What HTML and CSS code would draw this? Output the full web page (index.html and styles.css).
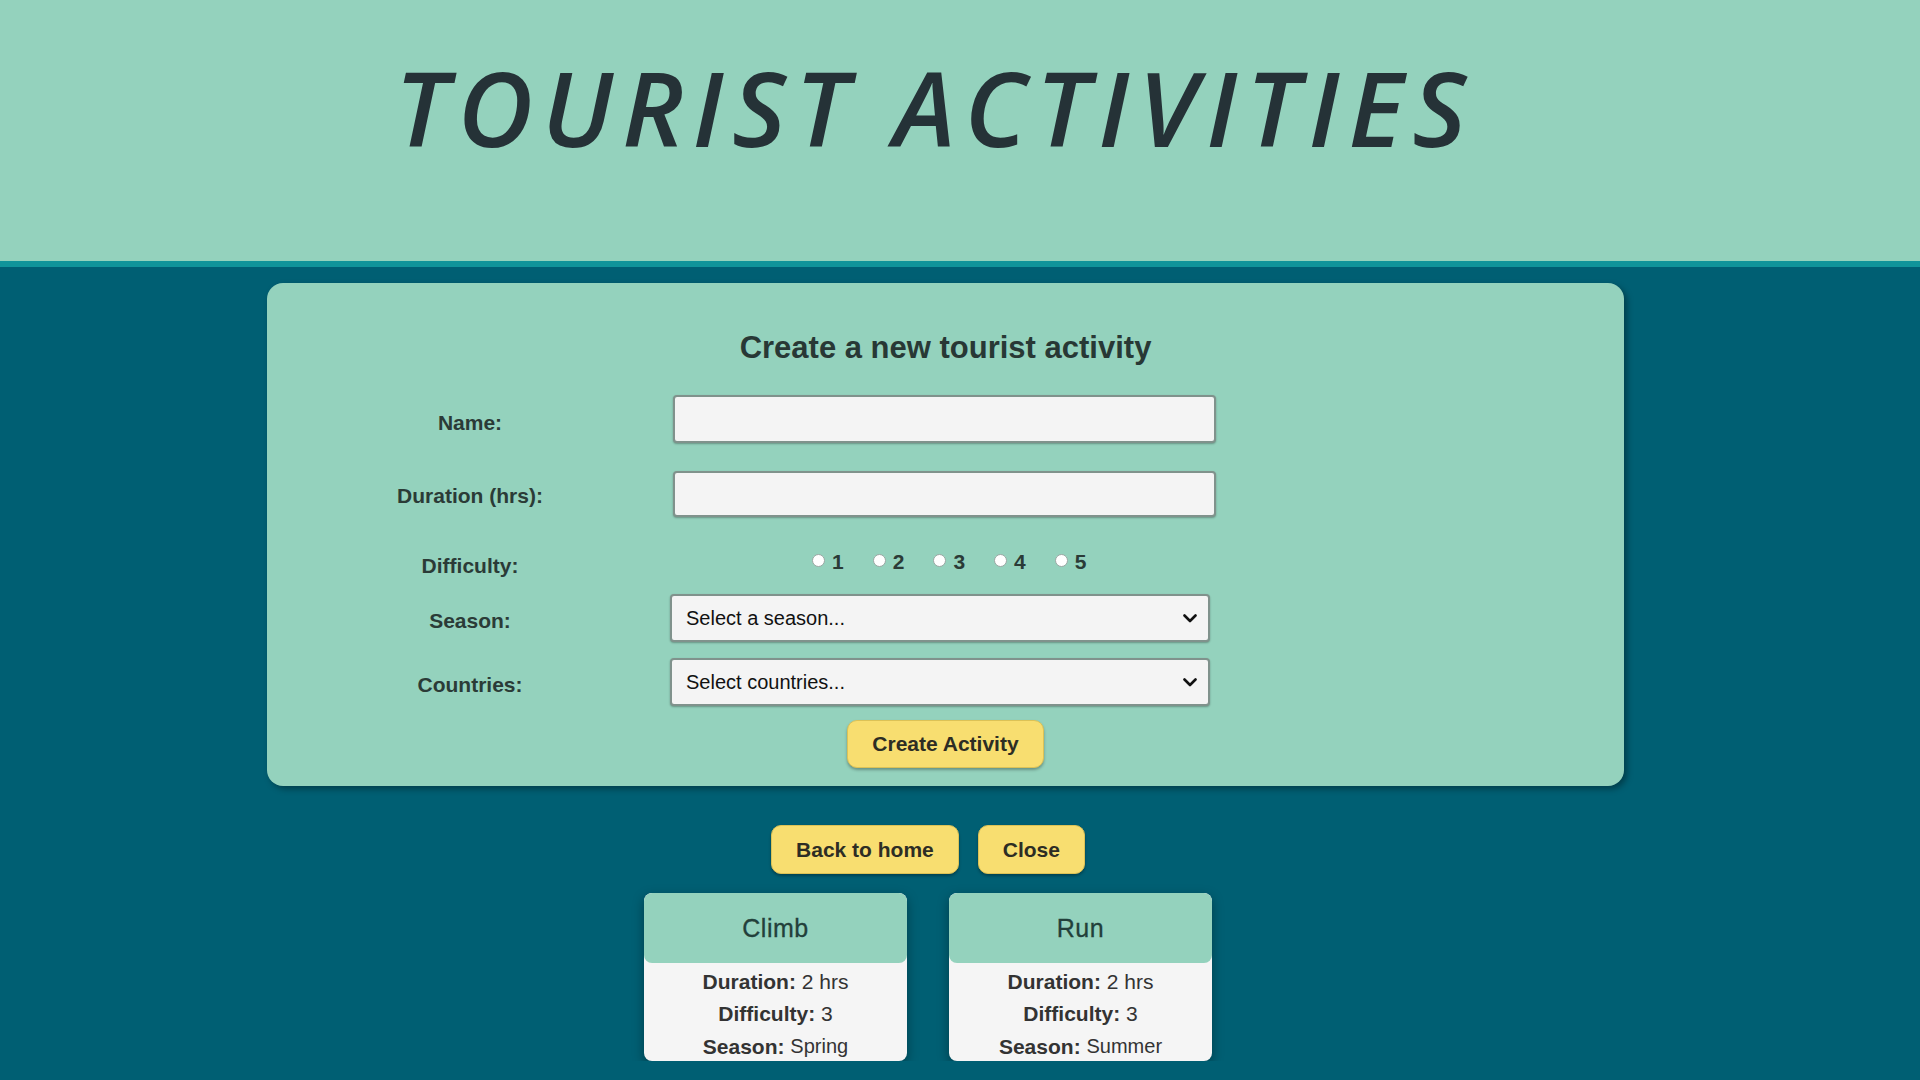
FILE: index.html
```html
<!DOCTYPE html>
<html lang="en">
<head>
<meta charset="utf-8">
<title>Tourist Activities</title>
<link rel="stylesheet" href="styles.css">
</head>
<body>
<header class="top">
  <h1 class="title">TOURIST ACTIVITIES</h1>
</header>
<main class="page">
  <form class="form-card">
    <h3 class="form-title">Create a new tourist activity</h3>
    <div class="row row-name">
      <label class="lbl">Name:</label>
      <input class="field" type="text">
    </div>
    <div class="row row-duration">
      <label class="lbl">Duration (hrs):</label>
      <input class="field field-short" type="text">
    </div>
    <div class="row row-difficulty">
      <label class="lbl">Difficulty:</label>
      <div class="radios">
        <label class="radio-item"><input class="radio" type="radio" name="d">1</label>
        <label class="radio-item"><input class="radio" type="radio" name="d">2</label>
        <label class="radio-item"><input class="radio" type="radio" name="d">3</label>
        <label class="radio-item"><input class="radio" type="radio" name="d">4</label>
        <label class="radio-item"><input class="radio" type="radio" name="d">5</label>
      </div>
    </div>
    <div class="row row-season">
      <label class="lbl">Season:</label>
      <div class="select-wrap">
        <select class="select"><option>Select a season...</option></select>
        <svg class="chev" viewBox="0 0 14 9" width="14" height="9"><polyline points="1.5,1.5 7,7 12.5,1.5" fill="none" stroke="#111" stroke-width="2.6" stroke-linecap="round" stroke-linejoin="round"/></svg>
      </div>
    </div>
    <div class="row row-countries">
      <label class="lbl">Countries:</label>
      <div class="select-wrap">
        <select class="select"><option>Select countries...</option></select>
        <svg class="chev" viewBox="0 0 14 9" width="14" height="9"><polyline points="1.5,1.5 7,7 12.5,1.5" fill="none" stroke="#111" stroke-width="2.6" stroke-linecap="round" stroke-linejoin="round"/></svg>
      </div>
    </div>
    <div class="form-actions">
      <button class="btn" type="button">Create Activity</button>
    </div>
  </form>

  <div class="actions">
    <button class="btn btn-low" type="button">Back to home</button>
    <button class="btn btn-low" type="button">Close</button>
  </div>

  <div class="cards">
    <div class="card">
      <div class="card-head">Climb</div>
      <div class="card-body">
        <div><b>Duration:</b> 2 hrs</div>
        <div><b>Difficulty:</b> 3</div>
        <div><b>Season:</b> <span class="val">Spring</span></div>
      </div>
    </div>
    <div class="card">
      <div class="card-head">Run</div>
      <div class="card-body">
        <div><b>Duration:</b> 2 hrs</div>
        <div><b>Difficulty:</b> 3</div>
        <div><b>Season:</b> <span class="val">Summer</span></div>
      </div>
    </div>
  </div>
</main>
</body>
</html>
```
FILE: styles.css
```css
html {
  background: #005f73;
}
body {
  margin: 0;
  background: #005f73;
  font-family: "Liberation Sans", Arial, sans-serif;
}

.top {
  height: 261px;
  background: #94d2bd;
  border-bottom: 6px solid #10949a;
}
.title {
  margin: 0;
  padding: 55px 50px 0 0;
  text-align: center;
  font-family: "Open Sans", sans-serif;
  font-style: italic;
  font-weight: 600;
  font-size: 104px;
  line-height: 104px;
  letter-spacing: 9px;
  color: #253237;
}

.page {
  padding-top: 16px;
}

.form-card {
  margin: 0 296px 0 267px;
  background: #94d2bd;
  border-radius: 16px;
  box-shadow: 3px 3px 6px rgba(0, 0, 0, 0.35);
  padding: 47px 0 18px;
}
.form-title {
  margin: 0;
  text-align: center;
  font-size: 31px;
  line-height: 36px;
  font-weight: bold;
  color: #283835;
}

.row {
  display: grid;
  grid-template-columns: 406px 543px 1fr;
  align-items: center;
}
.row-name { margin-top: 29px; }
.row-duration { margin-top: 28px; }
.row-difficulty { margin-top: 28px; }
.row-season { margin-top: 16px; }
.row-countries { margin-top: 16px; }

.lbl {
  text-align: center;
  font-size: 21px;
  line-height: 24px;
  font-weight: bold;
  color: #2b3b37;
  padding-top: 6px;
}
.row-name .lbl { padding-top: 8px; }
.row-duration .lbl { padding-top: 4px; }
.row-difficulty .lbl { padding-top: 9px; }

.field {
  box-sizing: border-box;
  width: 543px;
  height: 48px;
  border: 2px solid #80928c;
  border-radius: 4px;
  background: #f4f4f4;
  box-shadow: 0 1px 2px rgba(0, 0, 0, 0.3);
  font: 21px "Liberation Sans", Arial, sans-serif;
}
.field-short {
  height: 46px;
}

.radios {
  display: flex;
  align-items: center;
  padding-left: 139px;
}
.radio-item {
  display: flex;
  align-items: center;
  margin-right: 29px;
  font-size: 21px;
  line-height: 24px;
  font-weight: bold;
  color: #2b3b37;
}
.radio {
  appearance: none;
  -webkit-appearance: none;
  box-sizing: border-box;
  width: 13px;
  height: 13px;
  margin: 0 7px 2px 0;
  border: 1px solid #9aa7a3;
  border-radius: 50%;
  background: #fff;
}

.select-wrap {
  position: relative;
  width: 540px;
  margin-left: -3px;
}
.select {
  appearance: none;
  -webkit-appearance: none;
  box-sizing: border-box;
  width: 540px;
  height: 48px;
  padding: 0 40px 0 14px;
  border: 2px solid #80928c;
  border-radius: 4px;
  background: #f4f4f4;
  box-shadow: 0 1px 2px rgba(0, 0, 0, 0.3);
  font: 20px "Liberation Sans", Arial, sans-serif;
  color: #111;
}
.chev {
  position: absolute;
  right: 13px;
  top: 20px;
  pointer-events: none;
}

.form-actions {
  margin-top: 14px;
  display: flex;
  justify-content: center;
}

.btn {
  box-sizing: border-box;
  height: 48px;
  padding: 0 24px;
  border: 1px solid #dcc256;
  border-radius: 10px;
  background: #f8de70;
  box-shadow: 0 2px 3px rgba(0, 0, 0, 0.3);
  font: bold 21px "Liberation Sans", Arial, sans-serif;
  color: #2d2d24;
}
.btn-low {
  height: 49px;
}

.actions {
  display: flex;
  justify-content: center;
  gap: 19px;
  margin-top: 39px;
  padding-right: 64px;
}

.cards {
  display: flex;
  justify-content: center;
  gap: 42px;
  margin-top: 19px;
  padding-right: 64px;
}
.card {
  width: 263px;
  height: 168px;
  border-radius: 8px;
  background: #f5f5f5;
  overflow: hidden;
  box-shadow: 0 4px 12px rgba(0, 0, 0, 0.35);
}
.card-head {
  height: 70px;
  border-radius: 8px;
  background: #94d2bd;
  display: flex;
  align-items: center;
  justify-content: center;
  font-size: 25px;
  letter-spacing: 0.5px;
  color: #22403a;
  -webkit-text-stroke: 0.3px #22403a;
}
.card-body {
  padding-top: 3px;
  text-align: center;
  font-size: 21px;
  line-height: 32px;
  color: #333;
}
.card-body b {
  color: #333;
}
.val {
  font-size: 20px;
  vertical-align: 1px;
}
```
